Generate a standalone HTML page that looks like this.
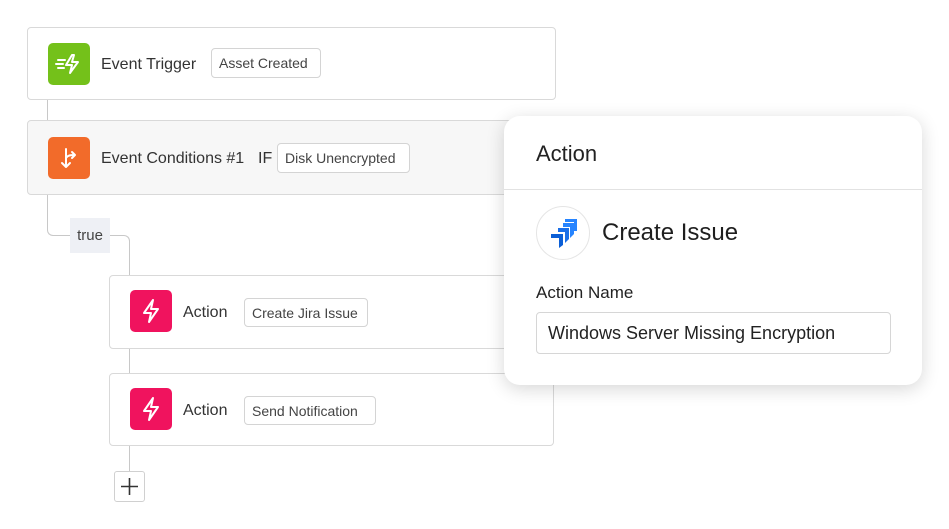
<!DOCTYPE html>
<html><head><style>
*{box-sizing:border-box;margin:0;padding:0}
body{width:949px;height:529px;background:#fff;position:relative;overflow:hidden;font-family:"Liberation Sans",sans-serif;color:#2a2a2a}
.card{position:absolute;border:1px solid #d9d9d9;border-radius:4px;background:#fff}
.icon{position:absolute;width:42px;height:42px;border-radius:5px;display:flex;align-items:center;justify-content:center}
.lbl{position:absolute;font-size:16px;color:#333;white-space:nowrap}
.tag{position:absolute;border:1px solid #d4d4d4;border-radius:4px;font-size:14px;color:#444;display:flex;align-items:center;padding:0 7px;background:#fff;white-space:nowrap}
.ln{position:absolute;background:#c8c8c8}
</style></head><body>
<div class="ln" style="left:47px;top:99px;width:1px;height:22px"></div>
<div style="position:absolute;left:47px;top:194px;width:24px;height:42px;border-left:1px solid #c8c8c8;border-bottom:1px solid #c8c8c8;border-bottom-left-radius:6px"></div>
<div style="position:absolute;left:110px;top:235px;width:20px;height:41px;border-top:1px solid #c8c8c8;border-right:1px solid #c8c8c8;border-top-right-radius:6px"></div>
<div style="position:absolute;left:70px;top:218px;width:40px;height:35px;background:#eef0f5;font-size:15px;color:#444;display:flex;align-items:center;justify-content:center">true</div>
<div class="ln" style="left:129px;top:348px;width:1px;height:26px"></div>
<div class="ln" style="left:129px;top:445px;width:1px;height:26px"></div>

<div class="card" style="left:27px;top:27px;width:529px;height:73px"></div>
<div class="icon" style="left:48px;top:43px;background:#74c11a"><svg width="28" height="24" viewBox="0 0 28 24" fill="none" stroke="#fff" stroke-width="2" stroke-linejoin="round" stroke-linecap="round"><path d="M17 3 L11 13 H17 L15 21 L23 10 H17 L19 3Z"/><path d="M3 8h7M1 12h7M3 16h6"/></svg></div>
<div class="lbl" style="left:101px;top:56px">Event Trigger</div>
<div class="tag" style="left:211px;top:48px;width:110px;height:30px">Asset Created</div>

<div class="card" style="left:27px;top:120px;width:529px;height:75px;background:#f7f7f7"></div>
<div class="icon" style="left:48px;top:137px;background:#f26b2a"><svg width="24" height="24" viewBox="0 0 24 24" fill="none" stroke="#fff" stroke-width="2" stroke-linecap="round" stroke-linejoin="round"><path d="M9 3v18M5 17l4 4 4-4M9 12c2-3 5-3 9-3M15 6l3 3-3 3"/></svg></div>
<div class="lbl" style="left:101px;top:150px">Event Conditions #1</div>
<div class="lbl" style="left:258px;top:150px">IF</div>
<div class="tag" style="left:277px;top:143px;width:133px;height:30px">Disk Unencrypted</div>

<div class="card" style="left:109px;top:275px;width:446px;height:74px"></div>
<div class="icon" style="left:130px;top:290px;background:#f0135e"><svg width="24" height="26" viewBox="0 0 24 26" fill="none" stroke="#fff" stroke-width="2" stroke-linejoin="round"><path d="M14 2 L5 15 H12 L10 24 L19 11 H12 L14 2Z"/></svg></div>
<div class="lbl" style="left:183px;top:304px">Action</div>
<div class="tag" style="left:244px;top:298px;width:124px;height:29px">Create Jira Issue</div>

<div class="card" style="left:109px;top:373px;width:445px;height:73px"></div>
<div class="icon" style="left:130px;top:388px;background:#f0135e"><svg width="24" height="26" viewBox="0 0 24 26" fill="none" stroke="#fff" stroke-width="2" stroke-linejoin="round"><path d="M14 2 L5 15 H12 L10 24 L19 11 H12 L14 2Z"/></svg></div>
<div class="lbl" style="left:183px;top:402px">Action</div>
<div class="tag" style="left:244px;top:396px;width:132px;height:29px">Send Notification</div>

<div style="position:absolute;left:114px;top:471px;width:31px;height:31px;border:1px solid #d0d0d0;border-radius:3px;background:#fff"><svg width="29" height="29" viewBox="0 0 29 29" stroke="#333" stroke-width="1.6"><path d="M14.5 6v17M6 14.5h17"/></svg></div>

<div style="position:absolute;left:504px;top:116px;width:418px;height:269px;background:#fff;border-radius:16px;box-shadow:0 4px 18px rgba(0,0,0,.16)">
<div style="position:absolute;left:32px;top:25px;font-size:22px;color:#222">Action</div>
<div style="position:absolute;left:0;top:73px;width:418px;height:1px;background:#e2e2e2"></div>
<div style="position:absolute;left:32px;top:90px;width:54px;height:54px;border:1px solid #e5e5e5;border-radius:50%;display:flex;align-items:center;justify-content:center"><svg width="32" height="32" viewBox="0 0 32 32">
<path d="M18 2 H30 V14 L27 14 L27 5 H18 Z" fill="#2684ff"/><path d="M16 6 H27 V17 L23 21 V10 H16 Z" fill="#2684ff"/>
<path d="M11 11 H22 V22 L18 26 V15 H11 Z" fill="#1a6fe8"/>
<path d="M4 17 H16 V28 L12 31 V21 H4 Z" fill="#0c5fd6"/></svg></div>
<div style="position:absolute;left:98px;top:103px;font-size:24px;color:#1e1e1e">Create Issue</div>
<div style="position:absolute;left:32px;top:167px;font-size:17px;color:#222">Action Name</div>
<div style="position:absolute;left:32px;top:196px;width:355px;height:42px;border:1px solid #d6d6d6;border-radius:4px;font-size:18px;color:#222;padding-left:11px;display:flex;align-items:center">Windows Server Missing Encryption</div>
</div>
</body></html>
